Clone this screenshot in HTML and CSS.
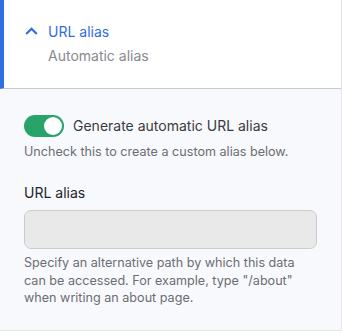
FILE: index.html
```html
<!DOCTYPE html>
<html lang="en">
<head>
  <meta charset="UTF-8" />
  <meta name="viewport" content="width=device-width, initial-scale=1.0" />
  <title>URL alias</title>
  <link rel="stylesheet" href="styles.css">
</head>
<body>
  <div class="panel">
    <div class="panel-header">
      <div class="panel-title">
        <svg class="chevron" width="13" height="8" viewBox="0 0 13 8">
          <path d="M1.2 7 L6.5 1.8 L11.8 7" fill="none" stroke="currentColor" stroke-width="2.2" />
        </svg>
        <span>URL alias</span>
      </div>
      <div class="panel-summary">Automatic alias</div>
    </div>

    <div class="panel-body">
      <label class="toggle-row">
        <span class="toggle on"><span class="knob"></span></span>
        <span>Generate automatic URL alias</span>
      </label>
      <p class="hint">Uncheck this to create a custom alias below.</p>

      <label class="field-label" for="alias">URL alias</label>
      <input type="text" id="alias" class="field" disabled />
      <p class="hint help">Specify an alternative path by which this data can be accessed. For example, type "/about" when writing an about page.</p>
    </div>
  </div>
</body>
</html>
```

FILE: styles.css
```css
* {
  box-sizing: border-box;
  margin: 0;
  padding: 0;
}

body {
  font-family: Inter, "Noto Sans", sans-serif;
  background: #fff;
  color: #232429;
}

.panel {
  width: 342px;
  border-right: 1px solid #e4e5ea;
  border-bottom: 1px solid #e4e5ea;
}

.panel-header {
  background: #fff;
  border-left: 4px solid #2f6fe4;
  border-bottom: 1px solid #c9cacf;
  padding: 22px 0 22px 21px;
}

.panel-title {
  display: flex;
  align-items: center;
  gap: 10px;
  color: #2d6ee0;
  font-size: 14px;
  line-height: 20px;
}

.chevron {
  margin-top: -2px;
}

.panel-summary {
  margin: 4px 0 0 23px;
  color: #88898f;
  font-size: 14px;
  line-height: 20px;
}

.panel-body {
  background: #f8f9fd;
  padding: 26px 24px 23px 24px;
}

.toggle-row {
  display: flex;
  align-items: center;
  gap: 9px;
  font-size: 14px;
  line-height: 22px;
  color: #3a3b40;
}

.toggle {
  width: 40px;
  height: 22px;
  border-radius: 11px;
  background: #d3d4d8;
  position: relative;
  flex: none;
}

.toggle.on {
  background: #28a36a;
}

.toggle .knob {
  position: absolute;
  top: 2px;
  left: 2px;
  width: 18px;
  height: 18px;
  border-radius: 50%;
  background: #fff;
}

.toggle.on .knob {
  left: 20px;
}

.hint {
  margin-top: 7px;
  font-size: 12.6px;
  line-height: 16px;
  color: #6c6d72;
}

.field-label {
  display: block;
  margin-top: 23px;
  font-size: 14px;
  line-height: 20px;
  color: #232429;
}

.field {
  display: block;
  width: 100%;
  height: 39px;
  margin-top: 7px;
  background: #e9e9ea;
  border: 1px solid #cbccd0;
  border-radius: 7px;
}

.help {
  margin-top: 5px;
  line-height: 17.5px;
}
```
